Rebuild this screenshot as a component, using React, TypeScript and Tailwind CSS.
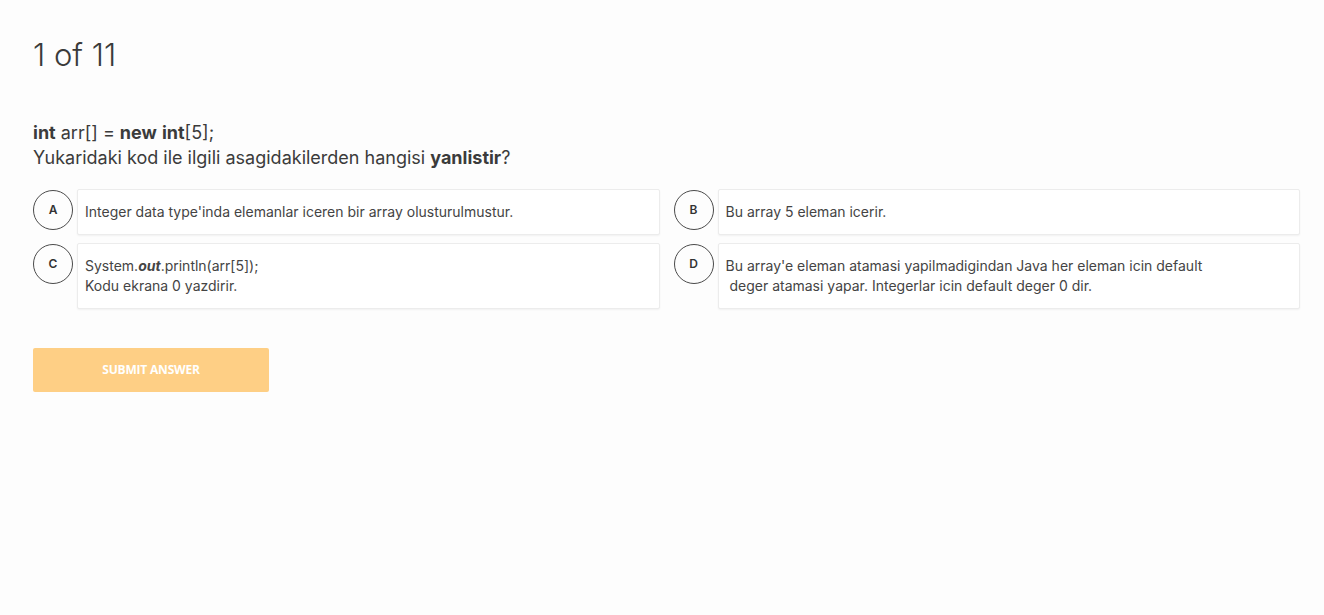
import type { ReactNode } from "react";

type Option = { key: string; body: ReactNode };

const options: Option[] = [
  { key: "A", body: "Integer data type'inda elemanlar iceren bir array olusturulmustur." },
  { key: "B", body: "Bu array 5 eleman icerir." },
  {
    key: "C",
    body: (
      <>
        System.<b className="italic font-bold">out</b>.println(arr[5]);
        <br />
        Kodu ekrana 0 yazdirir.
      </>
    ),
  },
  {
    key: "D",
    body: (
      <>
        Bu array'e eleman atamasi yapilmadigindan Java her eleman icin default
        <br />
        &nbsp;deger atamasi yapar. Integerlar icin default deger 0 dir.
      </>
    ),
  },
];

function OptionRow({ option }: { option: Option }) {
  return (
    <div className="flex items-start gap-1">
      <div className="mt-px flex h-[40px] w-[40px] shrink-0 items-center justify-center rounded-full border border-[#4a4a4a] text-[12px] font-semibold text-[#333]">
        {option.key}
      </div>
      <div className="flex-1 rounded-[2px] border border-[#ececec] bg-white px-[7px] py-[12px] text-[14px] leading-[20px] text-[#444] shadow-[0_1px_2px_rgba(0,0,0,0.05)]">
        {option.body}
      </div>
    </div>
  );
}

export default function App() {
  return (
    <div className="min-h-[615px] w-full bg-[#fdfdfd] pl-[33px] pr-[24px] pt-[35px] font-['Inter',sans-serif] text-[#333]">
      <h2 className="text-[31px] font-light leading-[40px] text-[#3a3a3a]">1 of 11</h2>

      <div className="mt-[45px] text-[18px] leading-[25px] text-[#3b3b3b]">
        <p>
          <b className="font-bold">int</b> arr[] = <b className="font-bold">new</b>{" "}
          <b className="font-bold">int</b>[5];
        </p>
        <p>
          Yukaridaki kod ile ilgili asagidakilerden hangisi <b className="font-bold">yanlistir</b>?
        </p>
      </div>

      <div className="mt-[19px] grid grid-cols-2 gap-x-[14px] gap-y-[8px]">
        {options.map((o) => (
          <OptionRow key={o.key} option={o} />
        ))}
      </div>

      <button className="mt-[39px] flex h-[44px] w-[236px] items-center justify-center rounded-[2px] bg-[#fecf85] font-['Open_Sans',sans-serif] text-[12px] font-bold uppercase tracking-[-0.2px] text-white">
        Submit Answer
      </button>
    </div>
  );
}
